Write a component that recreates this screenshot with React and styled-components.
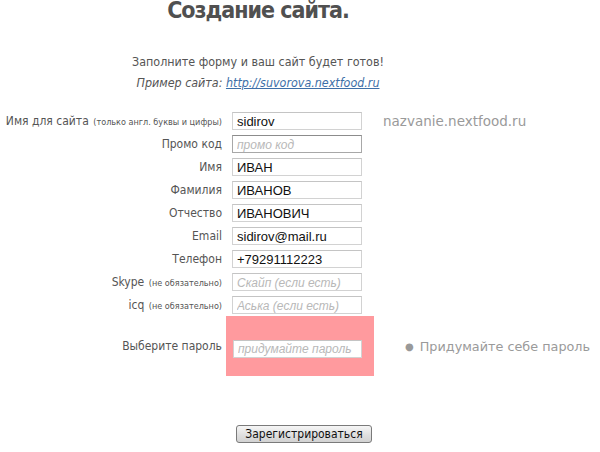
import React from 'react';
import styled, { createGlobalStyle } from 'styled-components';

const GlobalStyle = createGlobalStyle`
    html, body {
        margin: 0;
        padding: 0;
        background: #fff;
    }
    body {
        width: 600px;
        height: 452px;
        overflow: hidden;
        font-family: "DejaVu Sans Condensed", "DejaVu Sans", sans-serif;
    }
`

const StyledPage = styled.div`
    width: 600px;
    height: 452px;
    overflow: hidden;
`

const StyledHeader = styled.div`
    width: 516px;
    text-align: center;
    color: #555;
`
const StyledTitle = styled.h1`
    margin: -3px 0 0 0;
    font-family: "DejaVu Sans Condensed", "DejaVu Sans", sans-serif;
    font-size: 23px;
    font-weight: 700;
    letter-spacing: -1px;
    line-height: 26px;
    color: #505050;
`
const StyledLead = styled.p`
    margin: 28px 0 0 0;
    font-size: 12.4px;
    line-height: 21px;
    color: #555;
    em{
        font-style: italic;
    }
    a{
        color: #3d6fa8;
        text-decoration: underline;
    }
`

const StyledForm = styled.form`
    margin-top: 19px;
    display: flex;
    flex-direction: column;
    gap: 5px;
`
const StyledRow = styled.div`
    display: flex;
    align-items: center;
    height: 18px;
`
const StyledLabel = styled.label`
    width: 222px;
    margin-right: ${props => props.gap || 10}px;
    text-align: right;
    font-size: 12px;
    color: #555;
    white-space: nowrap;
    small{
        font-size: 9px;
        margin-left: 2px;
        color: #555;
    }
`
const StyledInput = styled.input`
    box-sizing: border-box;
    width: ${props => props.w || 130}px;
    height: ${props => props.h || 18}px;
    margin: 0;
    padding: 0 4px;
    border: 1px solid ${props => props.dark ? '#a8a8a8' : '#d2d2d2'};
    border-top-color: ${props => props.dark ? '#8c8c8c' : '#c4c4c4'};
    background: #fff;
    font-family: "Liberation Sans", Arial, sans-serif;
    font-size: 13px;
    color: #111;
    outline: none;
    &::placeholder{
        font-style: italic;
        font-size: 12px;
        color: #b8b8b8;
    }
`
const StyledHint = styled.span`
    margin-left: ${props => props.offset}px;
    font-family: "DejaVu Sans", sans-serif;
    font-size: ${props => props.size || 13.5}px;
    color: #9a9a9a;
    white-space: nowrap;
`
const StyledPasswordRow = styled.div`
    display: flex;
    align-items: center;
    margin-top: -3px;
`
const StyledPinkBox = styled.div`
    width: 148px;
    height: 60px;
    box-sizing: border-box;
    padding: 22px 0 0 7px;
    background: #ff9a9e;
`
const StyledBullet = styled.span`
    margin-right: 6px;
    font-size: 10px;
    color: #999;
    position: relative;
    top: -1px;
`
const StyledButtonRow = styled.div`
    margin-top: 44px;
    padding-left: 236px;
    line-height: 0;
`
const StyledButton = styled.button`
    width: 136px;
    height: 18px;
    padding: 0;
    border: 1px solid #7a7a7a;
    border-radius: 3px;
    background: linear-gradient(#f6f6f6, #dedede 60%, #d2d2d2);
    font-family: "DejaVu Sans Condensed", "DejaVu Sans", sans-serif;
    font-size: 12px;
    color: #111;
    line-height: 16px;
`

const fields = [
    { label: 'Имя для сайта', note: '(только англ. буквы и цифры)', value: 'sidirov', hint: 'nazvanie.nextfood.ru' },
    { label: 'Промо код', placeholder: 'промо код', dark: true },
    { label: 'Имя', value: 'ИВАН' },
    { label: 'Фамилия', value: 'ИВАНОВ' },
    { label: 'Отчество', value: 'ИВАНОВИЧ' },
    { label: 'Email', value: 'sidirov@mail.ru' },
    { label: 'Телефон', value: '+79291112223' },
    { label: 'Skype', note: '(не обязательно)', placeholder: 'Скайп (если есть)' },
    { label: 'icq', note: '(не обязательно)', placeholder: 'Аська (если есть)' },
]

const App = () => {
    return(
        <>
        <GlobalStyle />
        <StyledPage>
            <StyledHeader>
                <StyledTitle>Создание сайта.</StyledTitle>
                <StyledLead>
                    Заполните форму и ваш сайт будет готов!<br />
                    <em>Пример сайта: <a href="#example">http://suvorova.nextfood.ru</a></em>
                </StyledLead>
            </StyledHeader>

            <StyledForm onSubmit={e => e.preventDefault()}>
                {fields.map(field => (
                    <StyledRow key={field.label}>
                        <StyledLabel>
                            {field.label}
                            {field.note && <small> {field.note}</small>}
                        </StyledLabel>
                        <StyledInput
                            dark={field.dark}
                            defaultValue={field.value}
                            placeholder={field.placeholder} />
                        {field.hint && <StyledHint offset={21}>{field.hint}</StyledHint>}
                    </StyledRow>
                ))}

                <StyledPasswordRow>
                    <StyledLabel gap={4}>Выберите пароль</StyledLabel>
                    <StyledPinkBox>
                        <StyledInput type="password" w={129} placeholder="придумайте пароль" />
                    </StyledPinkBox>
                    <StyledHint offset={31} size={12.8}>
                        <StyledBullet>●</StyledBullet>Придумайте себе пароль
                    </StyledHint>
                </StyledPasswordRow>

                <StyledButtonRow>
                    <StyledButton type="submit">Зарегистрироваться</StyledButton>
                </StyledButtonRow>
            </StyledForm>
        </StyledPage>
        </>
    )
}
export default App
